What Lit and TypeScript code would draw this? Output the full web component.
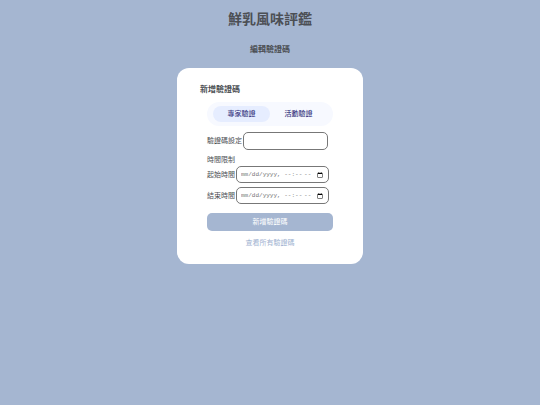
import { LitElement, html, css } from "lit";
import { customElement, state } from "lit/decorators.js";

@customElement("app-root")
export class AppRoot extends LitElement {
  @state() private tab = 0;

  static styles = css`
    :host {
      display: block;
      box-sizing: border-box;
      min-height: 100vh;
      padding: 7px 16px;
      background: #a5b6d1;
      color: #4c4f54;
      font-family: "Liberation Sans", "Noto Sans CJK TC", sans-serif;
      font-size: 7px;
      line-height: 10px;
    }
    * {
      box-sizing: border-box;
    }
    .page {
      display: flex;
      flex-direction: column;
      align-items: center;
    }
    h1, h2, h3, p {
      margin: 0;
    }
    h1 {
      font-size: 14px;
      line-height: 24px;
    }
    h2 {
      margin-top: 13px;
      font-size: 8px;
      line-height: 12px;
    }
    h3 {
      font-size: 8px;
      line-height: 12px;
    }
    .card {
      width: 100%;
      max-width: 186px;
      margin-top: 12px;
      padding: 16px 23px;
      border-radius: 12px;
      background: #fff;
    }
    .body {
      display: flex;
      flex-direction: column;
      padding: 0 7px;
    }
    .tabs {
      display: grid;
      grid-template-columns: 1fr 1fr;
      margin: 6px 0;
      padding: 4px 6px;
      border-radius: 12px;
      background: #f7f9ff;
    }
    button {
      border: 0;
      padding: 0;
      font: inherit;
      cursor: pointer;
    }
    .tab {
      height: 16px;
      border-radius: 8px;
      background: transparent;
      color: #3f3f85;
      font-weight: 500;
    }
    .tab.active {
      background: #e6edff;
    }
    .field {
      display: flex;
      align-items: center;
      gap: 1px;
      margin-bottom: 4px;
      white-space: nowrap;
    }
    input {
      height: 18px;
      border: 1px solid #777;
      border-radius: 5px;
      background: #fff;
      color: #757575;
      font: 6px/10px "Liberation Mono", monospace;
      padding: 0 4px;
      margin: 0;
      min-width: 0;
      outline: none;
    }
    .code {
      width: 85px;
    }
    .date {
      width: 93px;
      height: 17px;
      flex: none;
    }
    .date::-webkit-datetime-edit-month-field,
    .date::-webkit-datetime-edit-day-field,
    .date::-webkit-datetime-edit-year-field,
    .date::-webkit-datetime-edit-hour-field,
    .date::-webkit-datetime-edit-minute-field,
    .date::-webkit-datetime-edit-ampm-field {
      padding: 0;
    }
    .date::-webkit-calendar-picker-indicator {
      width: 6px;
      height: 6px;
      padding: 0;
      margin: 0 1px 0 0;
    }
    .note {
      margin: 1px 0;
    }
    .submit {
      height: 18px;
      margin-top: 5px;
      border-radius: 5px;
      background: #a5b6d1;
      color: #fff;
    }
    .link {
      align-self: center;
      margin-top: 7px;
      color: #9fb3d1;
      text-decoration: none;
    }
  `;

  private renderTab(label: string, index: number) {
    const active = this.tab === index;
    return html`<button
      type="button"
      class="tab ${active ? "active" : ""}"
      aria-pressed=${active}
      @click=${() => (this.tab = index)}
    >${label}</button>`;
  }

  render() {
    return html`
      <main class="page">
        <h1>鮮乳風味評鑑</h1>
        <h2>編輯驗證碼</h2>
        <section class="card">
          <h3>新增驗證碼</h3>
          <form class="body" @submit=${(e: Event) => e.preventDefault()}>
            <div class="tabs">
              ${this.renderTab("專家驗證", 0)}
              ${this.renderTab("活動驗證", 1)}
            </div>
            <div class="field">
              <label for="code">驗證碼設定</label>
              <input id="code" class="code" type="text" />
            </div>
            <p class="note">時間限制</p>
            <div class="field">
              <label for="start">起始時間</label>
              <input id="start" class="date" type="datetime-local" />
            </div>
            <div class="field">
              <label for="end">結束時間</label>
              <input id="end" class="date" type="datetime-local" />
            </div>
            <button type="submit" class="submit">新增驗證碼</button>
            <a class="link" href="#codes">查看所有驗證碼</a>
          </form>
        </section>
      </main>
    `;
  }
}
